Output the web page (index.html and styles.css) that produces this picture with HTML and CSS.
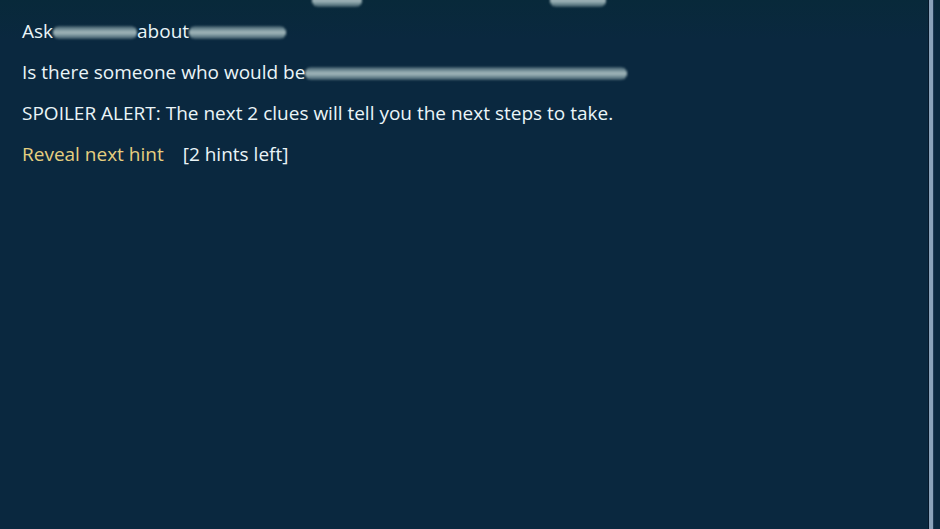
FILE: index.html
```html
<!DOCTYPE html>
<html>
<head>
<meta charset="utf-8">
<link rel="stylesheet" href="styles.css">
</head>
<body>
<div class="page">
  <main class="content">
    <div class="top-remnants">
      <span class="smudge s-top1"></span>
      <span class="smudge s-top2"></span>
    </div>
    <p class="line">Ask<span class="smudge s-name"></span>about<span class="smudge s-thing"></span></p>
    <p class="line">Is there someone who would be<span class="smudge s-long"></span></p>
    <p class="line">SPOILER ALERT: The next 2 clues will tell you the next steps to take.</p>
    <p class="line"><a class="reveal" href="#">Reveal next hint</a><span class="left">[2 hints left]</span></p>
  </main>
  <div class="scrollbar"><div class="thumb"></div></div>
</div>
</body>
</html>
```

FILE: styles.css
```css
html, body {
  margin: 0;
  padding: 0;
  height: 100%;
}
body {
  background: #0a283f;
  font-family: "Open Sans", "Noto Sans", sans-serif;
  color: #eaf5f8;
}
.page {
  display: flex;
  height: 529px;
  background: linear-gradient(#08293a 0, #0a283f 40px);
}
.content {
  flex: 1;
  padding: 0 0 0 22px;
  position: relative;
}
.top-remnants {
  height: 0;
  position: relative;
}
.top-remnants .smudge {
  position: absolute;
  top: -6px;
}
.s-top1 { left: 290px; width: 50px; }
.s-top2 { left: 528px; width: 56px; }
.line {
  margin: 0;
  font-size: 19px;
  line-height: 41px;
  white-space: nowrap;
}
.content .line:first-of-type {
  margin-top: 11px;
}
.smudge {
  display: inline-block;
  height: 13px;
  vertical-align: -1px;
  border-radius: 6px;
  background:
    repeating-linear-gradient(90deg, rgba(220,235,235,0.35) 0 1px, rgba(90,120,130,0.25) 1px 3px),
    linear-gradient(rgba(150,180,185,0.1), rgba(175,200,200,0.75) 35%, rgba(200,215,215,0.85) 50%, rgba(175,200,200,0.75) 65%, rgba(150,180,185,0.1));
  filter: blur(0.8px);
}
.s-name { width: 84px; }
.s-thing { width: 97px; }
.s-long { width: 322px; }
.reveal {
  color: #e6cf7f;
  text-decoration: none;
}
.left {
  margin-left: 19px;
}
.scrollbar {
  width: 14px;
  display: flex;
  justify-content: flex-start;
}
.thumb {
  width: 4px;
  margin-left: 2px;
  background: #8aa2ba;
  border-left: 1px solid #06182a;
  border-right: 1px solid #1e3a55;
}
```
